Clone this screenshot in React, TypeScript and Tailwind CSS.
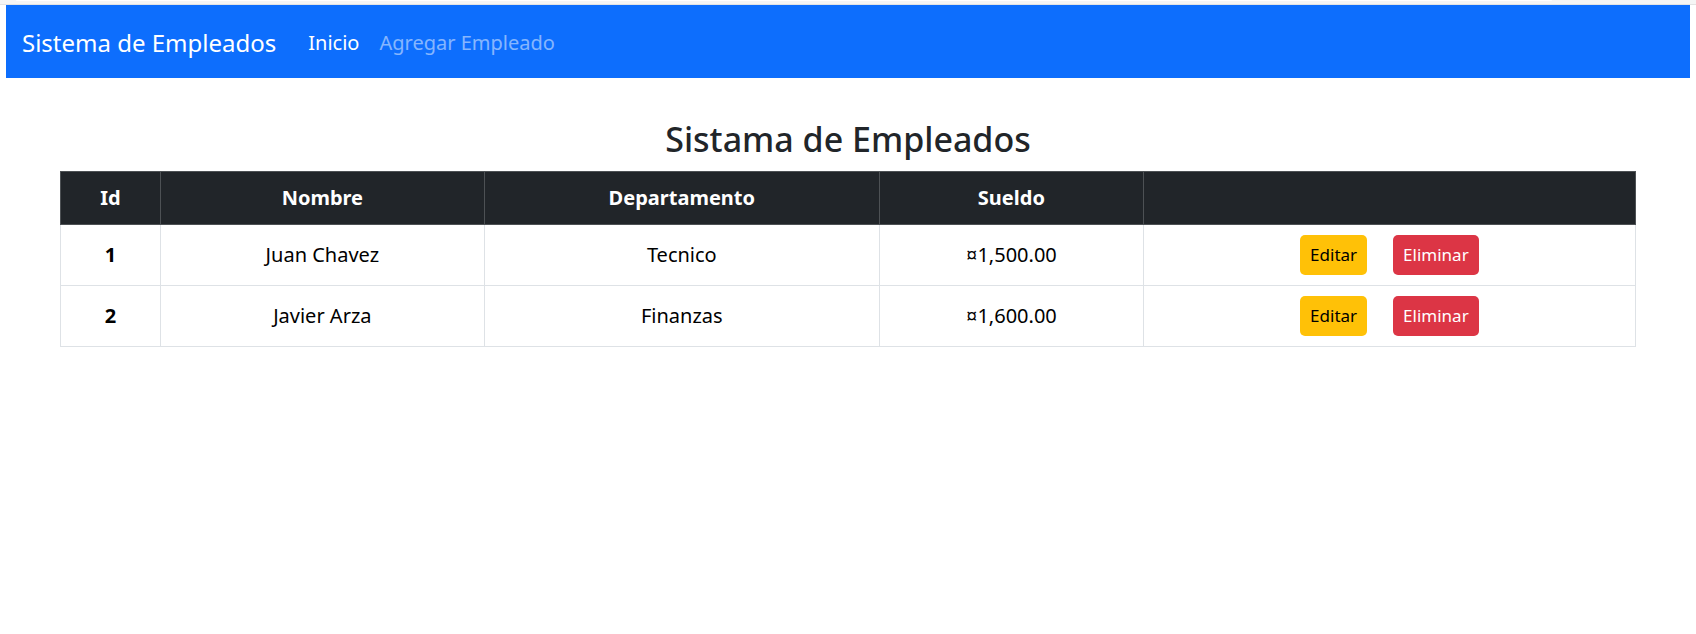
const employees = [
  { id: 1, name: "Juan Chavez", department: "Tecnico", salary: "¤1,500.00" },
  { id: 2, name: "Javier Arza", department: "Finanzas", salary: "¤1,600.00" },
];

export default function App() {
  return (
    <div className="min-h-screen bg-white font-['Noto_Sans',sans-serif] text-xl text-black">
      <div className="h-[5px] border-b border-[#e3e3e3] bg-[#f5f5f5] pr-36 pl-4">
        <div className="h-px rounded-b bg-white" />
      </div>
      <nav className="mx-1.5 flex h-[73px] items-center bg-[#0d6efd] px-4 pt-0.5">
        <a href="#" className="mr-8 text-2xl text-white">Sistema de Empleados</a>
        <div className="flex gap-5">
          <a href="#" className="text-white">Inicio</a>
          <a href="#" className="text-white/50">Agregar Empleado</a>
        </div>
      </nav>
      <main className="mx-15 pt-10">
        <h1 className="mb-2.5 text-center text-[34px] leading-[43px] font-medium text-[#212529]">
          Sistama de Empleados
        </h1>
        <table className="w-full table-fixed border-collapse text-center">
          <colgroup>
            <col className="w-[6.35%]" />
            <col className="w-[20.55%]" />
            <col className="w-[25.1%]" />
            <col className="w-[16.75%]" />
            <col />
          </colgroup>
          <thead>
            <tr className="h-[53px] bg-[#212529] text-white">
              {["Id", "Nombre", "Departamento", "Sueldo", ""].map((title) => (
                <th key={title} scope="col" className="border border-[#4d5154] font-bold">{title}</th>
              ))}
            </tr>
          </thead>
          <tbody>
            {employees.map((e) => (
              <tr key={e.id} className="h-[61px]">
                <th scope="row" className="border border-[#dee2e6] font-bold">{e.id}</th>
                <td className="border border-[#dee2e6]">{e.name}</td>
                <td className="border border-[#dee2e6]">{e.department}</td>
                <td className="border border-[#dee2e6]">{e.salary}</td>
                <td className="border border-[#dee2e6]">
                  <div className="flex items-center justify-center gap-[26px]">
                    <button type="button" className="h-10 rounded-[5px] bg-[#ffc107] px-2.5 text-[17px] text-black">Editar</button>
                    <button type="button" className="h-10 rounded-[5px] bg-[#dc3545] px-2.5 text-[17px] text-white">Eliminar</button>
                  </div>
                </td>
              </tr>
            ))}
          </tbody>
        </table>
      </main>
    </div>
  );
}
